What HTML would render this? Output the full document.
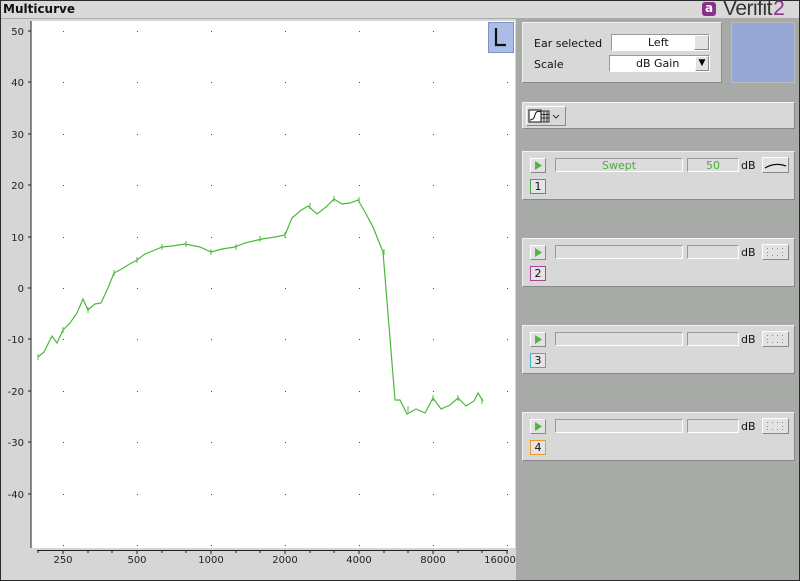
<!DOCTYPE html><html><head><style>
body{margin:0;width:800px;height:581px;overflow:hidden;background:#2a2a2a;font-family:"DejaVu Sans","Liberation Sans",sans-serif;}
svg{display:block}
.abs{position:absolute}
.box{position:absolute;background:#d8d8d8;border:1px solid #f2f2f2;border-right-color:#888;border-bottom-color:#888;box-sizing:border-box}
.fld{position:absolute;background:#dcdcdc;border:1px solid #999;border-right-color:#fff;border-bottom-color:#fff;box-sizing:border-box;font-size:11px;color:#4caf3c;text-align:center;line-height:13px}
.btn{position:absolute;background:#e2e2e2;border:1px solid #fff;border-right-color:#888;border-bottom-color:#888;box-sizing:border-box}
.lbl{font-size:11px;color:#111;position:absolute}
</style></head><body>
<div class="abs" style="left:1px;top:1px;width:798px;height:579px;background:#d6d6d6"></div>
<div class="abs" style="left:1px;top:1px;width:798px;height:17px;background:#d9d9d9;border-bottom:1px solid #aaa"></div>
<div class="abs" style="left:3px;top:2px;font-size:12px;font-weight:bold;color:#111">Multicurve</div>
<div class="abs" style="left:702px;top:2px;width:14px;height:14px;background:#8b2f8e;border-radius:3px;color:#fff;font-size:12px;line-height:13px;text-align:center;font-weight:bold">a</div>
<div class="abs" style="left:723px;top:-3px;font-size:21px;color:#333;font-family:'Liberation Sans Narrow','Liberation Sans',sans-serif;letter-spacing:-0.5px">Verifit<span style="color:#8b2f8e;font-size:8px;vertical-align:top">'</span><span style="color:#8b2f8e">2</span></div>
<div class="abs" style="left:516px;top:19px;width:283px;height:561px;background:#a8aaa8"></div>
<svg class="abs" style="left:0;top:19px" width="516" height="562" viewBox="0 19 516 562">
<rect x="31" y="21" width="484" height="527" fill="#fff"/>
<g font-size="10" fill="#222" text-anchor="end">
<text x="24" y="35">50</text><text x="24" y="86">40</text><text x="24" y="138">30</text><text x="24" y="189">20</text><text x="24" y="241">10</text><text x="24" y="292">0</text><text x="24" y="343">-10</text><text x="24" y="395">-20</text><text x="24" y="446">-30</text><text x="24" y="498">-40</text>
</g>
<g stroke="#222" stroke-width="1">
<line x1="31" y1="21" x2="31" y2="548"/>
<line x1="28" y1="31" x2="31" y2="31"/><line x1="28" y1="82" x2="31" y2="82"/><line x1="28" y1="134" x2="31" y2="134"/><line x1="28" y1="185" x2="31" y2="185"/><line x1="28" y1="237" x2="31" y2="237"/><line x1="28" y1="288" x2="31" y2="288"/><line x1="28" y1="339" x2="31" y2="339"/><line x1="28" y1="391" x2="31" y2="391"/><line x1="28" y1="442" x2="31" y2="442"/><line x1="28" y1="494" x2="31" y2="494"/>
<line x1="37" y1="550.5" x2="508" y2="550.5"/>
<path d="M38 550v3M63 550v4M88 550v3M112 550v3M137 550v4M162 550v3M186 550v3M211 550v4M236 550v3M260 550v3M285 550v4M310 550v3M334 550v3M359 550v4M384 550v3M408 550v3M433 550v4M458 550v3M482 550v3M507 550v4"/>
</g>
<g fill="#555">
<path d="M63 31h1v1h-1zM137 31h1v1h-1zM211 31h1v1h-1zM285 31h1v1h-1zM359 31h1v1h-1zM433 31h1v1h-1z"/>
</g>
<g id="dots" fill="#444"></g>
<g font-size="10" fill="#222" text-anchor="middle">
<text x="63" y="563">250</text><text x="137" y="563">500</text><text x="211" y="563">1000</text><text x="285" y="563">2000</text><text x="359" y="563">4000</text><text x="433" y="563">8000</text><text x="500" y="563">16000</text>
</g>
<polyline fill="none" stroke="#4cb83c" stroke-width="1.2" points="38,357 44,352 52,336 57,343 63,330 70,323 77,313 83,299 88,310 95,304 101,303 108,288 114,273 120,270 128,265 137,260 145,254 155,250 162,247 172,246 185,244 200,247 211,252 222,249 235,247 245,243 262,239 275,237 285,235 292,218 300,211 308,206 317,214 326,207 334,199 342,204 350,203 358,200 365,212 373,227 383,252 395,400 400,400 407,414 416,409 425,413 433,398 441,409 450,405 458,398 466,406 474,401 478,393 483,401"/>
<g stroke="#4cb83c" stroke-width="1"><path d="M38 354v6M63 327v6M88 307v6M114 270v6M137 257v6M162 244v6M186 241v6M211 249v6M236 244v6M260 236v6M285 232v6M310 203v6M334 196v6M359 197v6M384 249v6M408 406v6M433 395v6M458 395v6M482 398v6"/></g>
<rect x="488.5" y="22.5" width="25" height="30" fill="#a9bde6" stroke="#7d92c4"/>
<path d="M496 28v17h10" fill="none" stroke="#111" stroke-width="2.2"/>
</svg>
<script>
var g=document.getElementById('dots'),s='';
[82,134,185,237,288,339,391,442,494,545].forEach(function(y){[63,137,211,285,359,433,507].forEach(function(x){s+='<rect x="'+x+'" y="'+y+'" width="1" height="1"/>'})});
g.innerHTML=s;
</script>
<div class="box" style="left:522px;top:22px;width:200px;height:61px"></div>
<div class="lbl" style="left:534px;top:37px">Ear selected</div>
<div class="lbl" style="left:534px;top:58px">Scale</div>
<div class="fld" style="left:611px;top:34px;width:99px;height:17px;background:#fff;color:#111;line-height:15px;text-align:left;padding-left:36px">Left</div>
<div class="btn" style="left:694px;top:35px;width:15px;height:15px"></div>
<div class="fld" style="left:609px;top:55px;width:101px;height:17px;background:#fff;color:#111;line-height:15px;text-align:left;padding-left:26px">dB Gain</div>
<div class="btn" style="left:695px;top:56px;width:14px;height:15px;font-size:9px;line-height:13px;text-align:center">▼</div>
<div class="abs" style="left:731px;top:22px;width:64px;height:61px;background:#97a8d7;border:1px solid #bbb;box-sizing:border-box"></div>
<div class="box" style="left:522px;top:102px;width:273px;height:27px"></div>
<div class="btn" style="left:526px;top:106px;width:40px;height:20px;background:#d8d8d8">
<svg width="38" height="18"><rect x="2" y="3" width="12" height="12" fill="#fff" stroke="#111"/><path d="M3 13 Q7 13 8 8 T14 5" fill="none" stroke="#111"/><path d="M14 4h8v11h-8M14 7.5h8M14 11h8M17 4v11M20 4v11" fill="none" stroke="#111" stroke-width=".8"/><path d="M26 8l3 3 3-3" fill="none" stroke="#333"/></svg></div>
<div id="ch"></div>
<script>
var cols=['#3fa84a','#b0409a','#3eb4c8','#e89a2a'],tops=[151,238,325,412],h='';
for(var i=0;i<4;i++){var t=tops[i];
h+='<div class="box" style="left:522px;top:'+t+'px;width:273px;height:49px"></div>';
h+='<div class="btn" style="left:530px;top:'+(t+7)+'px;width:16px;height:15px"><svg width="14" height="13"><path d="M4 2l7 4.5-7 4.5z" fill="#4cb83c"/></svg></div>';
h+='<div class="fld" style="left:555px;top:'+(t+7)+'px;width:128px;height:14px">'+(i==0?'Swept':'')+'</div>';
h+='<div class="fld" style="left:687px;top:'+(t+7)+'px;width:52px;height:14px;text-align:right;padding-right:18px">'+(i==0?'50':'')+'</div>';
h+='<div class="lbl" style="left:741px;top:'+(t+8)+'px">dB</div>';
h+='<div class="btn" style="left:762px;top:'+(t+6)+'px;width:27px;height:16px">'+(i==0?'<svg width="25" height="14"><path d="M2 10 Q12 4 23 8" fill="none" stroke="#111" stroke-width="1.3"/></svg>':'<svg width="25" height="14"><g fill="#888"><rect x="4" y="3" width="1" height="1"/><rect x="9" y="3" width="1" height="1"/><rect x="14" y="3" width="1" height="1"/><rect x="19" y="3" width="1" height="1"/><rect x="4" y="7" width="1" height="1"/><rect x="19" y="7" width="1" height="1"/><rect x="4" y="10" width="1" height="1"/><rect x="9" y="10" width="1" height="1"/><rect x="14" y="10" width="1" height="1"/><rect x="19" y="10" width="1" height="1"/></g></svg>')+'</div>';
h+='<div class="abs" style="left:530px;top:'+(t+28)+'px;width:16px;height:15px;border:1px solid '+cols[i]+';box-sizing:border-box;background:#e4e4e4;font-size:11px;line-height:13px;text-align:center;color:#111">'+(i+1)+'</div>';
}
document.getElementById('ch').innerHTML=h;
</script>
</body></html>
